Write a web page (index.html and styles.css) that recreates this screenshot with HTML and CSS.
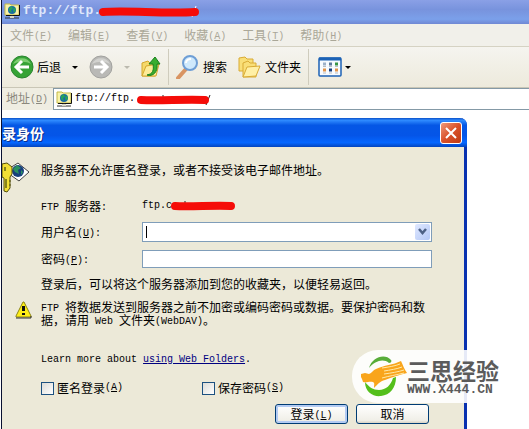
FILE: index.html
```html
<!DOCTYPE html>
<html lang="zh-CN">
<head>
    <meta charset="UTF-8">
    <meta name="viewport" content="width=device-width, initial-scale=1.0">
    <title>登录身份</title>
    <link rel="stylesheet" href="styles.css">
</head>
<body>
    <svg class="symbols" width="0" height="0">
        <symbol id="site" viewBox="0 0 16 16">
            <path d="M1 3V1h5l1 1h8v10H1z" fill="#f8f3a8" stroke="#c4b848"/>
            <path d="M15.500 2v10.500H2" fill="none" stroke="#111"/>
            <circle cx="8" cy="7" r="4" fill="#1768a8"/>
            <path d="M5 5l3-2 1 3-2 1 1 3-3-2zM10 4l2 3-2 3-1-3z" fill="#27a35a"/>
            <path d="M8 12v2M1 15h14" stroke="#333" stroke-width="1"/>
            <path d="M6 14h4" stroke="#d8d8c8" stroke-width="2"/>
        </symbol>
    </svg>
    <div class="window">
        <div class="titlebar">
            <svg class="icon16"><use href="#site"/></svg>
            <span class="address-title">ftp://ftp.</span>
            <svg class="mark-title" viewBox="0 0 102 14">
                <path d="M94 13l4-11" stroke="#fff"/>
                <path d="M5 8C30 6 65 10 97 8" class="red" stroke-width="8"/>
            </svg>
        </div>
        <div class="menu">
            <span>文件<i>(<u>F</u>)</i></span>
            <span>编辑<i>(<u>E</u>)</i></span>
            <span>查看<i>(<u>V</u>)</i></span>
            <span>收藏<i>(<u>A</u>)</i></span>
            <span>工具<i>(<u>T</u>)</i></span>
            <span>帮助<i>(<u>H</u>)</i></span>
        </div>
        <div class="toolbar">
            <button class="tool">
                <svg width="24" height="24" viewBox="0 0 24 24">
                    <circle cx="12" cy="12" r="11" fill="#36a336" stroke="#2a8430"/>
                    <path d="M3 9a10 10 0 0 1 18 0c-5-3-12-3-18 0z" fill="#7ccd70"/>
                    <path d="M12 6l-6 6 6 6M6 12h13" fill="none" stroke="#fff" stroke-width="3"/>
                </svg>后退
            </button>
            <button class="drop" aria-label="后退列表"></button>
            <button class="tool" aria-label="前进">
                <svg width="24" height="24" viewBox="0 0 24 24">
                    <circle cx="12" cy="12" r="11" fill="#b9b9b6" stroke="#a2a29f"/>
                    <path d="M3 9a10 10 0 0 1 18 0c-5-3-12-3-18 0z" fill="#d2d2cf"/>
                    <path d="M12 6l6 6-6 6M18 12H5" fill="none" stroke="#fff" stroke-width="3"/>
                </svg>
            </button>
            <button class="drop off" aria-label="前进列表"></button>
            <button class="tool" aria-label="向上">
                <svg width="20" height="24" viewBox="0 0 20 24">
                    <path d="M1 21V8l6-2 2 2h5v13z" fill="#f5d86a" stroke="#d4a72c"/>
                    <path d="M1 21l4-10 13-2-3 12z" fill="#fdeb97" stroke="#d4a72c"/>
                    <path d="M6 20c6-1 7-5 6-11H8l6-7 5 7h-3c1 8-4 13-10 11z" fill="#37ad2f" stroke="#18801c"/>
                </svg>
            </button>
            <span class="sep"></span>
            <button class="tool">
                <svg width="24" height="24" viewBox="0 0 24 24">
                    <path d="M10 14l-8 9" stroke="#d99562" stroke-width="4" stroke-linecap="round"/>
                    <circle cx="14" cy="8" r="7" fill="#cfe9fc" stroke="#6e9ed5" stroke-width="2"/>
                    <path d="M10 8c0-3 3-4 5-4" fill="none" stroke="#fff" stroke-width="2"/>
                </svg>搜索
            </button>
            <button class="tool">
                <svg width="24" height="24" viewBox="0 0 24 24">
                    <path d="M1 16V3l6-1 2 2h6v12z" fill="#f9df78" stroke="#d9ab35"/>
                    <path d="M5 22V8l5-2 2 2h6v14z" fill="#f9df78" stroke="#d9ab35"/>
                    <path d="M5 22l4-10 13-1-4 10z" fill="#fff0a6" stroke="#d9ab35"/>
                </svg>文件夹
            </button>
            <span class="sep"></span>
            <button class="view" aria-label="查看方式">
                <svg width="24" height="20" viewBox="0 0 24 20">
                    <rect x="1" y="1" width="22" height="18" rx="1" fill="#f7fbff" stroke="#1c62b5" stroke-width="1.5"/>
                    <path d="M1 2h22" stroke="#1c62b5" stroke-width="3"/>
                    <path d="M5 7h3" stroke="#9db1c8" stroke-width="3"/>
                    <path d="M11 7h3" stroke="#5b7899" stroke-width="3"/>
                    <path d="M17 7h3" stroke="#389545" stroke-width="3"/>
                    <path d="M5 13h3M17 13h3" stroke="#e2954b" stroke-width="3"/>
                    <path d="M11 13h3" stroke="#17407f" stroke-width="3"/>
                    <path d="M5 9.500h3M11 9.500h3M17 9.500h3M5 16h3M11 16h3M17 16h3" stroke="#b8bdc2"/>
                </svg>
            </button>
            <button class="drop" aria-label="查看列表"></button>
        </div>
        <div class="addressbar">
            <span class="address-label">地址<i>(<u>D</u>)</i></span>
            <div class="address">
                <svg class="icon16"><use href="#site"/></svg>
                <i>ftp://ftp.</i>
                <svg class="mark-address" viewBox="0 0 76 14">
                    <path d="M71 13l4-10M28 3v6" stroke="#222"/>
                    <path d="M6 8C25 9 50 7 70 8" class="red" stroke-width="8"/>
                </svg>
            </div>
        </div>
        <form class="dialog">
            <div class="dialog-title">
                <h1>录身份</h1>
                <button type="button" class="close" aria-label="关闭">
                    <svg width="18" height="18" viewBox="0 0 18 18"><path d="M4 4l10 10M14 4L4 14" stroke="#fff" stroke-width="2"/></svg>
                </button>
            </div>
            <div class="dialog-body">
                <div class="line intro">
                    <svg class="key" width="28" height="32" viewBox="0 0 28 32">
                        <path d="M3 9L16 1l11 9-10 9z" fill="#fff" stroke="#444"/>
                        <circle cx="16" cy="9" r="6" fill="#173f7c"/>
                        <path d="M11 7l4-4 4 3-3 2 1 4-4-2zM19 8l2 2-2 3z" fill="#2a9060"/>
                        <path d="M0 2l5-1 5 4v7l-2 3v11l-3 4-3-1V16l-2-1z" fill="#f2df35" stroke="#55500c"/>
                        <path d="M3 5v4M4 17v9" stroke="#87831b" stroke-width="2"/>
                        <path d="M7 19h2M7 23h2" stroke="#55500c"/>
                    </svg>
                    <p>服务器不允许匿名登录，或者不接受该电子邮件地址。</p>
                </div>
                <div class="row server">
                    <span class="label"><i>FTP </i>服务器<i>:</i></span>
                    <span class="host"><i>ftp.c</i><svg class="mark-host" viewBox="0 0 66 12">
                        <path d="M15 1v4" stroke="#222"/>
                        <path d="M5 6C20 7 45 5 61 6" class="red" stroke-width="8"/>
                    </svg></span>
                </div>
                <div class="row">
                    <label class="label" for="user">用户名<i>(<u>U</u>):</i></label>
                    <div class="combo">
                        <input type="text" id="user">
                        <button type="button" aria-label="展开">
                            <svg width="9" height="7" viewBox="0 0 9 7"><path d="M1 1l3.500 4L8 1" fill="none" stroke="#4d6185" stroke-width="2.500"/></svg>
                        </button>
                    </div>
                </div>
                <div class="row">
                    <label class="label" for="pass">密码<i>(<u>P</u>):</i></label>
                    <input type="password" id="pass">
                </div>
                <p class="line note">登录后，可以将这个服务器添加到您的收藏夹，以便轻易返回。</p>
                <div class="line warning">
                    <svg width="17" height="18" viewBox="0 0 17 18">
                        <path d="M8 1L1 15v1h15v-1L9 1z" fill="#ffee16" stroke="#8c8614"/>
                        <path d="M1 17h15V15" fill="none" stroke="#333"/>
                        <path d="M8.500 5v5M8.500 12v2" stroke="#111" stroke-width="3"/>
                    </svg>
                    <p><i>FTP </i>将数据发送到服务器之前不加密或编码密码或数据。要保护密码和数据，请用<i> Web </i>文件夹<i>(WebDAV)</i>。</p>
                </div>
                <p class="line more"><i>Learn more about <a href="#">using Web Folders</a>.</i></p>
                <div class="checks">
                    <label><input type="checkbox">匿名登录<i>(<u>A</u>)</i></label>
                    <label><input type="checkbox">保存密码<i>(<u>S</u>)</i></label>
                </div>
                <div class="buttons">
                    <button type="button" class="login">登录<i>(<u>L</u>)</i></button>
                    <button type="button">取消</button>
                </div>
            </div>
        </form>
        <div class="watermark">
            <svg width="46" height="42" viewBox="0 0 46 42">
                <path d="M8 12C11 1 24-3 30 4c1 1 0 3-2 3C22 2 14 5 8 12z" fill="#58ad3a"/>
                <path d="M4 26c0 10 8 15 16 14 9-1 15-8 15-19l-3 1c-2 7-7 12-14 12-6 0-10-3-14-8z" fill="#54bf1b"/>
                <path d="M0 18l4-1 4 1c3-1 4-4 7-5 8-4 17-4 25-8 2 4 3 8 6 12-8 2-15 4-22 7-5 1-8 5-11 8 0-3 1-5-1-6-4-1-6 1-10 0l-1-3-1-2z" fill="#f9a51c"/>
                <path d="M21 12c7-1 13-2 18-4M23 15c6-1 13-2 18-4M23 18c7-1 14-2 20-4M21 22c7-2 14-3 22-5" fill="none" stroke="#ffe9a8"/>
            </svg>
            <div class="brand">
                <strong>三思经验</strong>
                <span>WWW.X444.CN</span>
            </div>
        </div>
    </div>
</body>
</html>
```

FILE: styles.css
```css
* { margin: 0; padding: 0; box-sizing: border-box; }
body {
    background: #fff;
    color: #000;
    font: 12px/14px "Noto Sans CJK SC", sans-serif;
    overflow: hidden;
}
button, input {
    font: inherit;
    color: inherit;
}
button {
    background: none;
    border: 0;
}
/* half-width latin next to 12px hanzi */
i {
    font: 10px/10px "Liberation Mono", monospace;
    vertical-align: 1px;
    white-space: pre;
}
svg {
    display: block;
    flex: none;
}
.symbols { position: absolute; }
.red {
    fill: none;
    stroke: #f50c08;
    stroke-linecap: round;
}
.window {
    position: relative;
    display: flex;
    flex-direction: column;
    min-height: 100vh;
    margin-left: 1px;
    border-left: 1px solid #081030;
}
.icon16 {
    width: 16px;
    height: 16px;
}
.titlebar {
    display: flex;
    align-items: center;
    height: 24px;
    padding: 0 0 2px 2px;
    gap: 3px;
    background: linear-gradient(#8aa0e6, #7893dd 40%, #7ba0ea 80%, #7088d4);
}
.address-title {
    color: #dfe8fb;
    font: bold 13px/16px "Liberation Mono", monospace;
}
.mark-title {
    width: 102px;
    height: 14px;
    margin-left: -6px;
}
.menu {
    display: flex;
    gap: 16px;
    height: 23px;
    padding: 4px 8px;
    color: #aaa798;
    background: #f1f0ea;
    border-bottom: 1px solid #d5d2c3;
}
.toolbar {
    display: flex;
    align-items: center;
    gap: 11px;
    height: 41px;
    padding: 0 8px;
    background: linear-gradient(#f5f4ef, #edeadc);
    border-bottom: 1px solid #c9c6b6;
}
.tool {
    display: flex;
    align-items: center;
    gap: 3px;
}
.drop {
    border: 3px solid transparent;
    border-top-color: #000;
    border-bottom: 0;
}
.drop.off { border-top-color: #bbb9ae; }
.sep {
    width: 1px;
    height: 36px;
    margin: 0 -4px;
    background: #cfccbd;
}
.view { margin: 0 -8px 0 2px; }
.addressbar {
    display: flex;
    height: 22px;
    background: #efede2;
}
.address-label {
    width: 51px;
    padding: 3px 4px;
    color: #8b887d;
    white-space: nowrap;
}
.address {
    display: flex;
    flex: 1;
    align-items: center;
    gap: 3px;
    padding-left: 2px;
    background: #fff;
    border: 1px solid #8499a6;
    border-right: 0;
}
.mark-address {
    width: 76px;
    height: 14px;
    margin-left: -3px;
}
.dialog {
    flex: 1;
    margin: 8px 62px 0 0;
    border-right: 3px solid #0831b0;
    border-radius: 0 7px 0 0;
    background: #ece9d8;
}
.dialog-title {
    display: flex;
    align-items: center;
    justify-content: space-between;
    height: 29px;
    margin-right: -3px;
    padding-right: 5px;
    border-radius: 0 7px 0 0;
    background: linear-gradient(#0a50c8, #2f8bff 8%, #0557e5 25%, #0555e8 60%, #0567ff 85%, #0344bd);
}
.dialog-title h1 {
    color: #fff;
    font-size: 14px;
    line-height: 20px;
    text-shadow: 1px 1px #0b2f8c;
}
.close {
    padding: 1px;
    border: 1px solid #fff;
    border-radius: 3px;
    background: linear-gradient(135deg, #ee9a7c, #d9512a 50%, #bf3a12);
}
.dialog-body { padding: 15px 32px 5px 39px; }
.line, .row { margin-bottom: 8px; }
.intro {
    display: flex;
    margin-left: -39px;
    gap: 11px;
    height: 28px;
}
.intro p { padding-top: 1px; }
.row {
    display: flex;
    align-items: center;
    height: 19px;
}
.row.server {
    height: 16px;
}
.label { width: 101px; }
.host {
    display: flex;
    align-items: center;
}
.mark-host {
    width: 66px;
    height: 12px;
    margin-left: -2px;
}
.combo {
    display: flex;
    flex: 1;
    height: 20px;
    padding: 1px;
    background: #fff;
    border: 1px solid #7f9db9;
}
.combo input {
    flex: 1;
    min-width: 0;
    border: 0;
    outline: 0;
    /* text caret */
    background: linear-gradient(#000, #000) 2px 2px / 1px 12px no-repeat;
}
.combo button {
    display: flex;
    align-items: center;
    justify-content: center;
    width: 15px;
    border-radius: 2px;
    background: linear-gradient(135deg, #dfe8ff, #b4c8f6);
}
#pass {
    flex: 1;
    height: 18px;
    background: #fff;
    border: 1px solid #7f9db9;
}
.note { padding-top: 1px; }
.warning {
    display: flex;
    margin-left: -26px;
    padding-top: 2px;
    gap: 9px;
    line-height: 12px;
}
.more { padding: 16px 0 8px; }
.more a { color: #000080; }
.checks { display: flex; }
.checks label {
    display: flex;
    align-items: center;
    width: 161px;
}
.checks input {
    appearance: none;
    width: 13px;
    height: 13px;
    margin-right: 3px;
    border: 1px solid #1c5180;
    background: linear-gradient(135deg, #dcdcd7, #fff);
}
.buttons {
    display: flex;
    justify-content: flex-end;
    gap: 8px;
    padding-top: 9px;
    margin-right: 3px;
}
.buttons button {
    width: 73px;
    height: 20px;
    border: 1px solid #003c74;
    border-radius: 3px;
    background: linear-gradient(#fff, #f0efe8 85%, #d8d2c4);
}
.buttons .login { box-shadow: inset 0 0 0 2px #b3cbf3; }
.watermark {
    position: absolute;
    top: 350px;
    right: 0;
    display: flex;
    align-items: center;
    width: 177px;
    height: 53px;
    padding-left: 9px;
    border-radius: 26px 0 0 26px;
    background: rgba(255, 255, 255, .9);
}
.brand {
    display: flex;
    flex-direction: column;
    color: #5b5b5b;
}
.brand strong {
    font-size: 23px;
    line-height: 26px;
}
.brand span {
    font: bold 13px/14px "Liberation Mono", monospace;
}
```
